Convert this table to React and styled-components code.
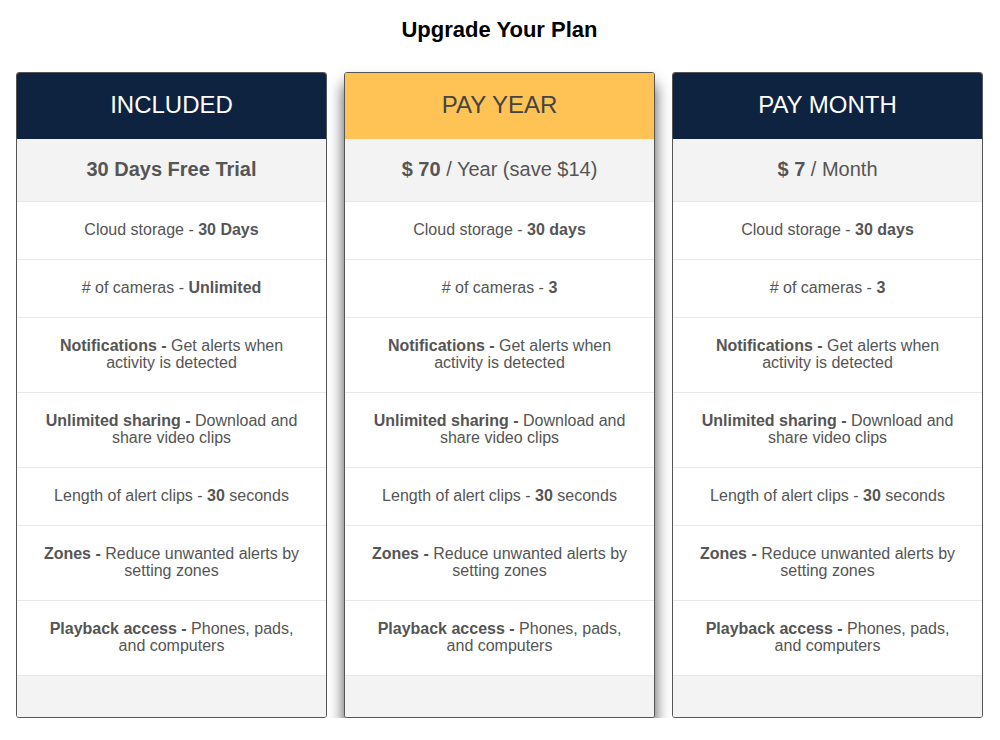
import React from 'react';
import styled, { createGlobalStyle } from 'styled-components';

const GlobalStyle = createGlobalStyle`
	body {
		margin: 0;
		background: #fff;
		font-family: "Liberation Sans", Arial, Helvetica, sans-serif;
	}
`;

const Page = styled.div`
	padding: 0 17px 0 16px;
	h1 {
		margin: 0;
		padding: 17px 0 30px 0;
		text-align: center;
		font-size: 22px;
		line-height: 25px;
		font-weight: bold;
		color: #000;
	}
`;

const Columns = styled.div`
	display: grid;
	grid-template-columns: repeat(3, 1fr);
	column-gap: 17px;
`;

const Card = styled.div`
	border: 1px solid #555;
	border-radius: 3px;
	overflow: hidden;
	background: #fff;
	box-shadow: ${(p) => (p.featured ? '0 12px 15px rgba(0, 0, 0, 0.7)' : 'none')};
`;

const Header = styled.div`
	background: ${(p) => (p.featured ? '#ffc355' : '#0d2340')};
	color: ${(p) => (p.featured ? '#444' : '#fff')};
	font-size: 24px;
	line-height: 26px;
	padding: 19px 0 21px 0;
	text-align: center;
`;

const Price = styled.div`
	background: #f3f3f3;
	color: #555;
	font-size: 20px;
	line-height: 23px;
	padding: 19px 0 20px 0;
	text-align: center;
	border-bottom: 1px solid #e8e8e8;
	b {
		font-weight: bold;
	}
`;

const Feature = styled.div`
	color: #555;
	font-size: 16px;
	line-height: 17px;
	padding: 19px 24px 21px 24px;
	text-align: center;
	border-bottom: 1px solid #e8e8e8;
	b {
		font-weight: bold;
	}
`;

const Footer = styled.div`
	background: #f3f3f3;
	height: 41px;
`;

const plans = [
	{
		name: 'INCLUDED',
		price: <b>30 Days Free Trial</b>,
		storage: '30 Days',
		cameras: 'Unlimited',
	},
	{
		name: 'PAY YEAR',
		featured: true,
		price: (
			<>
				<b>$ 70</b> / Year (save $14)
			</>
		),
		storage: '30 days',
		cameras: '3',
	},
	{
		name: 'PAY MONTH',
		price: (
			<>
				<b>$ 7</b> / Month
			</>
		),
		storage: '30 days',
		cameras: '3',
	},
];

const App = () => (
	<Page>
		<GlobalStyle />
		<h1>Upgrade Your Plan</h1>
		<Columns>
			{plans.map((plan) => (
				<Card key={plan.name} featured={plan.featured}>
					<Header featured={plan.featured}>{plan.name}</Header>
					<Price>{plan.price}</Price>
					<Feature>
						Cloud storage - <b>{plan.storage}</b>
					</Feature>
					<Feature>
						# of cameras - <b>{plan.cameras}</b>
					</Feature>
					<Feature>
						<b>Notifications -</b> Get alerts when activity is detected
					</Feature>
					<Feature>
						<b>Unlimited sharing -</b> Download and share video clips
					</Feature>
					<Feature>
						Length of alert clips - <b>30</b> seconds
					</Feature>
					<Feature>
						<b>Zones -</b> Reduce unwanted alerts by setting zones
					</Feature>
					<Feature>
						<b>Playback access -</b> Phones, pads, and computers
					</Feature>
					<Footer />
				</Card>
			))}
		</Columns>
	</Page>
);

export default App;
